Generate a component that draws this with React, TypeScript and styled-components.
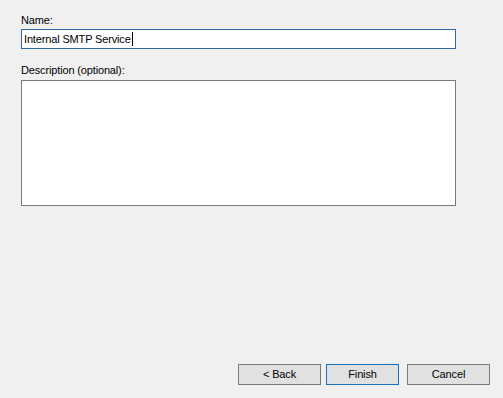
import React from "react";
import styled, { createGlobalStyle } from "styled-components";

const GlobalStyle = createGlobalStyle`
  html, body {
    margin: 0;
    padding: 0;
    background: #f0f0f0;
  }
  body {
    font-family: "Liberation Sans", Arial, sans-serif;
    font-size: 11px;
    letter-spacing: -0.15px;
    color: #000;
  }
`;

export default function App() {
  return (
    <>
      <GlobalStyle />
      <Page>
        <Form>
          <Label>Name:</Label>
          <TextField>
            Internal SMTP Service
            <Caret />
          </TextField>
          <Label top={14}>Description (optional):</Label>
          <TextArea />
        </Form>
        <ButtonRow>
          <Button width={83}>&lt; Back</Button>
          <Button width={73} primary>
            Finish
          </Button>
          <Button width={83} gap={8}>
            Cancel
          </Button>
        </ButtonRow>
      </Page>
    </>
  );
}

// styled component
const Page = styled.div`
  width: 503px;
  height: 398px;
  display: flex;
  flex-direction: column;
  box-sizing: border-box;
  padding: 13px 13px 13px 21px;
`;

const Form = styled.div`
  display: flex;
  flex-direction: column;
  width: 435px;
`;

const Label = styled.div<{ top?: number }>`
  height: 15px;
  line-height: 15px;
  margin-top: ${(p) => p.top ?? 0}px;
  margin-bottom: 1px;
  white-space: nowrap;
`;

const TextField = styled.div`
  box-sizing: border-box;
  height: 20px;
  border: 1px solid #2b6aa3;
  background: #fff;
  padding: 0 2px;
  display: flex;
  align-items: center;
  line-height: 18px;
  white-space: nowrap;
`;

const Caret = styled.span`
  display: inline-block;
  width: 1px;
  height: 14px;
  background: #000;
  margin-left: 1px;
`;

const TextArea = styled.div`
  box-sizing: border-box;
  height: 126px;
  margin-top: 1px;
  border: 1px solid #7a7a7a;
  background: #fff;
`;

const ButtonRow = styled.div`
  margin-top: auto;
  display: flex;
  justify-content: flex-end;
`;

const Button = styled.div<{ width: number; primary?: boolean; gap?: number }>`
  box-sizing: border-box;
  width: ${(p) => p.width}px;
  height: 21px;
  margin-left: ${(p) => p.gap ?? 5}px;
  border: 1px solid ${(p) => (p.primary ? "#1a72bf" : "#7a7a7a")};
  background: #e1e1e1;
  display: flex;
  align-items: center;
  justify-content: center;
  line-height: 19px;
`;
